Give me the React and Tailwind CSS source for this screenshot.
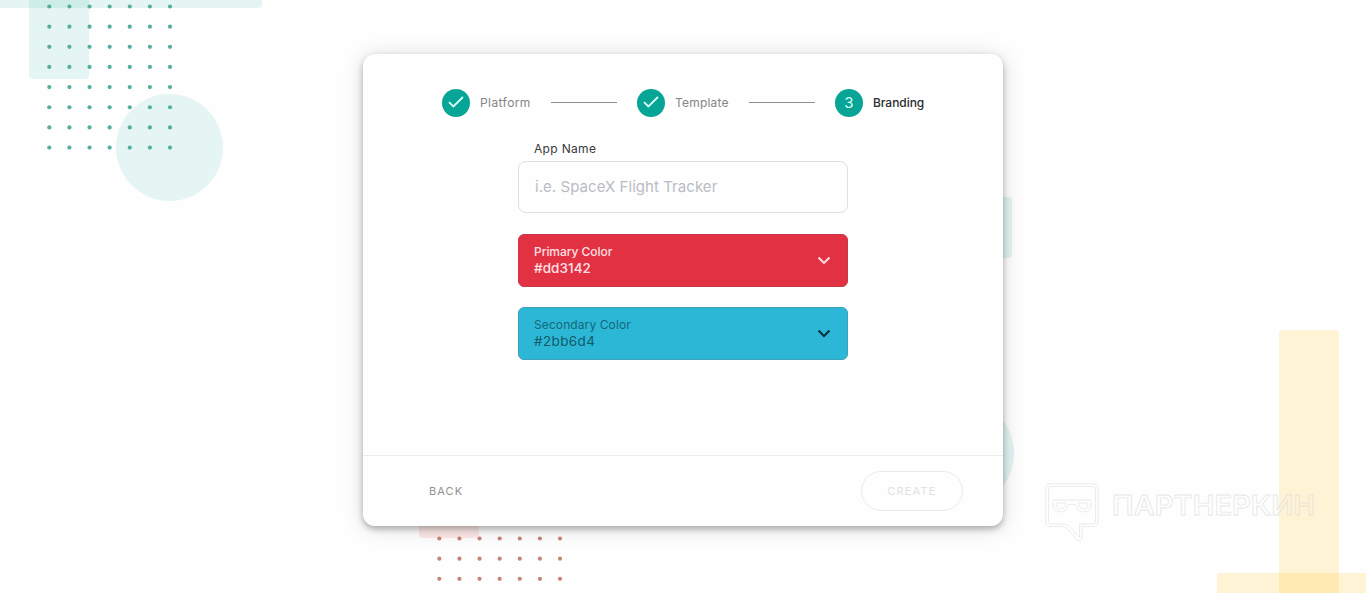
const steps = [
    { label: "Platform", done: true, width: "w-[51px]", tracking: "tracking-[0.42px]" },
    { label: "Template", done: true, width: "w-[54px]", tracking: "tracking-[0.2px]" },
    { label: "Branding", done: false, width: "w-[51px]", tracking: "tracking-[-0.05px]" },
]

function Dots({ columns, rows, className }) {
    const dots = []
    for (let row = 0; row < rows; row++) {
        for (let column = 0; column < columns; column++) {
            dots.push(<circle key={row + "-" + column} cx={2.3 + column * 20.12} cy={2.5 + row * 20.15} r="2.1" />)
        }
    }
    return (
        <svg width="126" height={rows * 20.15} fill="currentColor" className={className}>
            {dots}
        </svg>
    )
}

function Background() {
    return (
        <div className="absolute inset-0" aria-hidden="true">
            <div className="absolute left-0 top-0 w-[262px] h-2 rounded-br bg-[#00a693]/10" />
            <div className="absolute left-[29px] top-0 w-[60px] h-[79px] rounded-b bg-[#00a693]/10" />
            <div className="absolute left-[116px] top-[94px] w-[107px] h-[107px] rounded-full bg-[#00a693]/10" />
            <Dots columns={7} rows={8} className="absolute left-[47px] top-1 text-[#56aea0]" />

            <div className="absolute left-[952px] top-[197px] w-[60px] h-[61px] rounded-r-sm bg-[#00a693]/11" />
            <div className="absolute left-[906px] top-[399px] w-[108px] h-[108px] rounded-full bg-[#00a693]/11" />

            <div className="absolute left-[419px] top-[470px] w-[60px] h-[68px] rounded-b bg-[#f05a4a]/13" />
            <Dots columns={7} rows={3} className="absolute left-[437px] top-[536px] text-[#ca8377]" />

            <div className="absolute left-[1279px] top-[330px] w-[60px] h-[263px] rounded-t bg-[#ffc62f]/20" />
            <div className="absolute left-[1217px] top-[573px] w-[149px] h-5 rounded-tl-sm bg-[#ffc62f]/20" />
        </div>
    )
}

function Stepper() {
    return (
        <div className="flex items-center justify-center gap-5 h-7">
            {steps.map(function (step, index) {
                return (
                    <div key={step.label} className="flex items-center gap-5">
                        {index > 0 ? <div className="w-[66px] h-px mb-px bg-[#8e8e8e]" /> : null}
                        <div className="flex items-center gap-2.5">
                            <div className="w-7 h-7 rounded-full bg-[#06a595] text-[#d9fffa] text-[15px] flex items-center justify-center">
                                {step.done ? (
                                    <svg width="16" height="12" viewBox="0 0 16 12" fill="none" stroke="currentColor" strokeWidth="1.8" className="mb-0.5">
                                        <path d="M1 6.2L5.4 10.5L15 1" />
                                    </svg>
                                ) : (
                                    index + 1
                                )}
                            </div>
                            <span className={"text-[12px] leading-4 whitespace-nowrap " + step.width + " " + step.tracking + (step.done ? " text-[#858585]" : " font-medium text-[#2b2b2b]")}>
                                {step.label}
                            </span>
                        </div>
                    </div>
                )
            })}
        </div>
    )
}

function ColorField({ label, value, className, labelClass, valueClass, iconClass }) {
    return (
        <button className={"flex items-center justify-between w-full h-[53px] px-[15px] pb-0.5 rounded-md border text-left " + className}>
            <span className="flex flex-col">
                <span className={"text-[12px] leading-[17px] " + labelClass}>{label}</span>
                <span className={"text-[13.5px] leading-[17px] " + valueClass}>{value}</span>
            </span>
            <svg width="16" height="16" viewBox="0 0 16 16" fill="none" stroke="currentColor" strokeWidth="2.2" className={iconClass}>
                <path d="M2.500 5.500L8 11L13.500 5.500" />
            </svg>
        </button>
    )
}

function Watermark() {
    return (
        <div className="absolute left-[1045px] top-[483px] pointer-events-none">
            <svg width="275" height="60" viewBox="0 0 275 60" fill="none" stroke="#dcdcdc" strokeOpacity="0.7" strokeWidth="0.8">
                <path d="M5 .8H49Q53 .8 53 5V39Q53 43.5 48.5 43.5H37V55Q36.500 59 32.500 57.500Q29 53.500 26 49.500Q22 44 18 43.500H5Q.8 43.500 .8 39V5Q.8 .8 5 .8Z" />
                <path d="M6 3.500H47.500Q50.500 3.500 50.500 6.500V38Q50.500 41 47.500 41H34.500V54Q32 53 28 47Q24 41 18 41H6Q3.500 41 3.500 38V6.500Q3.500 3.500 6 3.500Z" />
                <path d="M9.500 17H44.500Q46.500 17 46.500 20Q46 29 38 29Q32 29 30.500 21.500H23Q22 29 16 29Q8 28.500 7.500 20Q7.500 17 9.500 17Z" />
                <path d="M11 20H20.500Q20.500 26 15.500 26Q11 25.500 11 20ZM33.500 20H43Q43 26 38 26Q33.500 25.500 33.500 20Z" />
                <text x="67" y="31.500" textLength="203" lengthAdjust="spacingAndGlyphs" fontFamily="Inter, sans-serif" fontSize="26.500" fontWeight="600">
                    ПАРТНЕРКИН
                </text>
            </svg>
        </div>
    )
}

export default function App() {
    return (
        <div className="relative w-full h-[593px] overflow-hidden bg-[#fefefe] font-['Inter',sans-serif]">
            <Background />

            <div className="relative mx-auto mt-[54px] w-[640px] h-[472px] flex flex-col rounded-xl bg-[#fefefe] shadow-[0_3px_6px_rgba(0,0,0,0.28),0_2px_22px_rgba(0,0,0,0.14)]">
                <div className="flex-1 pt-[35px]">
                    <Stepper />

                    <div className="w-[330px] mx-auto mt-[23px] flex flex-col">
                        <label htmlFor="app-name" className="pl-4 text-[12px] leading-[18px] tracking-[0.32px] text-[#3a3a3a]">App Name</label>
                        <input
                            id="app-name"
                            placeholder="i.e. SpaceX Flight Tracker"
                            className="mt-[3px] w-full h-[52px] pl-4 pr-[15px] pb-0.5 rounded-lg border border-[#dedfe2] bg-[#fefefe] text-[15px] tracking-[0.05px] placeholder:text-[#b9bcc4] outline-none"
                        />
                        <div className="mt-[21px] flex flex-col gap-5">
                            <ColorField
                                label="Primary Color"
                                value="#dd3142"
                                className="bg-[#e13143] border-[#c93748]"
                                labelClass="font-medium tracking-[-0.05px] text-[#ffe1e4]"
                                valueClass="font-medium tracking-[0.05px] text-[#ffe1e4]"
                                iconClass="text-[#ffd5d9]"
                            />
                            <ColorField
                                label="Secondary Color"
                                value="#2bb6d4"
                                className="bg-[#2cb7d6] border-[#3ca3b9]"
                                labelClass="tracking-[0.1px] text-[#146879]"
                                valueClass="tracking-[0.38px] text-[#12596a]"
                                iconClass="text-[#08333f]"
                            />
                        </div>
                    </div>
                </div>

                <div className="h-[71px] flex items-center justify-between pl-[66px] pr-10 border-t border-[#ebebeb]">
                    <button className="text-[11px] tracking-[1.1px] text-[#929292]">BACK</button>
                    <button className="w-[102px] h-10 rounded-full border border-[#e9e9e9] text-[11px] tracking-[1.2px] text-[#e2e2e2]">CREATE</button>
                </div>
            </div>

            <Watermark />
        </div>
    )
}
